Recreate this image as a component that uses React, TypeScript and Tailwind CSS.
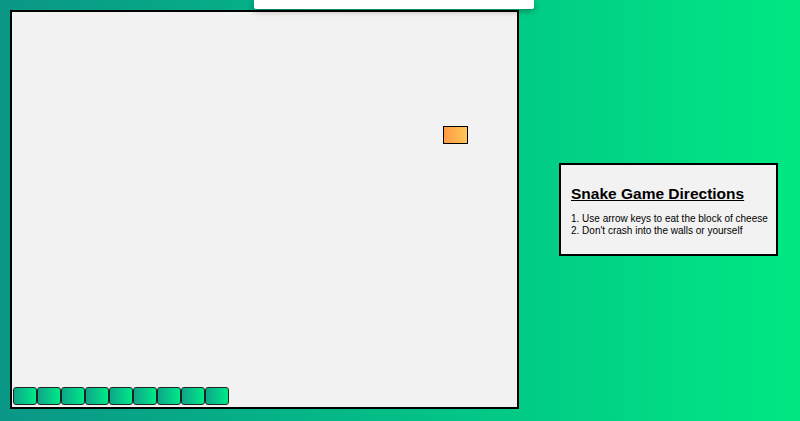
import React from "react";

export default function App() {
  const segs = Array.from({ length: 9 });
  return (
    <div
      className="relative w-full h-[421px] overflow-hidden bg-gradient-to-r from-[#0a9786] to-[#00e882]"
      style={{ fontFamily: '"Liberation Sans", Arial, sans-serif' }}
    >
      <div className="absolute left-[254px] top-0 w-[280px] h-[9px] bg-white rounded-b-[2px] shadow-[0_2px_6px_rgba(0,0,0,0.35)] z-10" />
      <div className="flex items-center pl-[10px] pt-[10px] gap-[40px]">
        <div className="relative w-[509px] h-[399px] border-2 border-black bg-[#f2f2f2] shrink-0 flex flex-col justify-end pl-[1px] pb-[2px]">
          <div className="absolute left-[431px] top-[114px] w-[25px] h-[18px] border border-black bg-gradient-to-r from-[#ff9a45] to-[#ffc657]" />
          <div className="flex">
            {segs.map((_, i) => (
              <div
                key={i}
                className="w-[24px] h-[18px] border border-[#222] rounded-[3px] bg-gradient-to-r from-[#0ea588] to-[#00ea86]"
              />
            ))}
          </div>
        </div>
        <div className="w-[219px] h-[93px] border-2 border-black bg-[#f2f2f2] pl-[10px] pt-[19px] text-black shrink-0">
          <div className="text-[15.5px] font-bold underline leading-[20px]">Snake Game Directions</div>
          <div className="mt-[9px] text-[10px] leading-[12px]">
            <div>1. Use arrow keys to eat the block of cheese</div>
            <div>2. Don't crash into the walls or yourself</div>
          </div>
        </div>
      </div>
    </div>
  );
}
